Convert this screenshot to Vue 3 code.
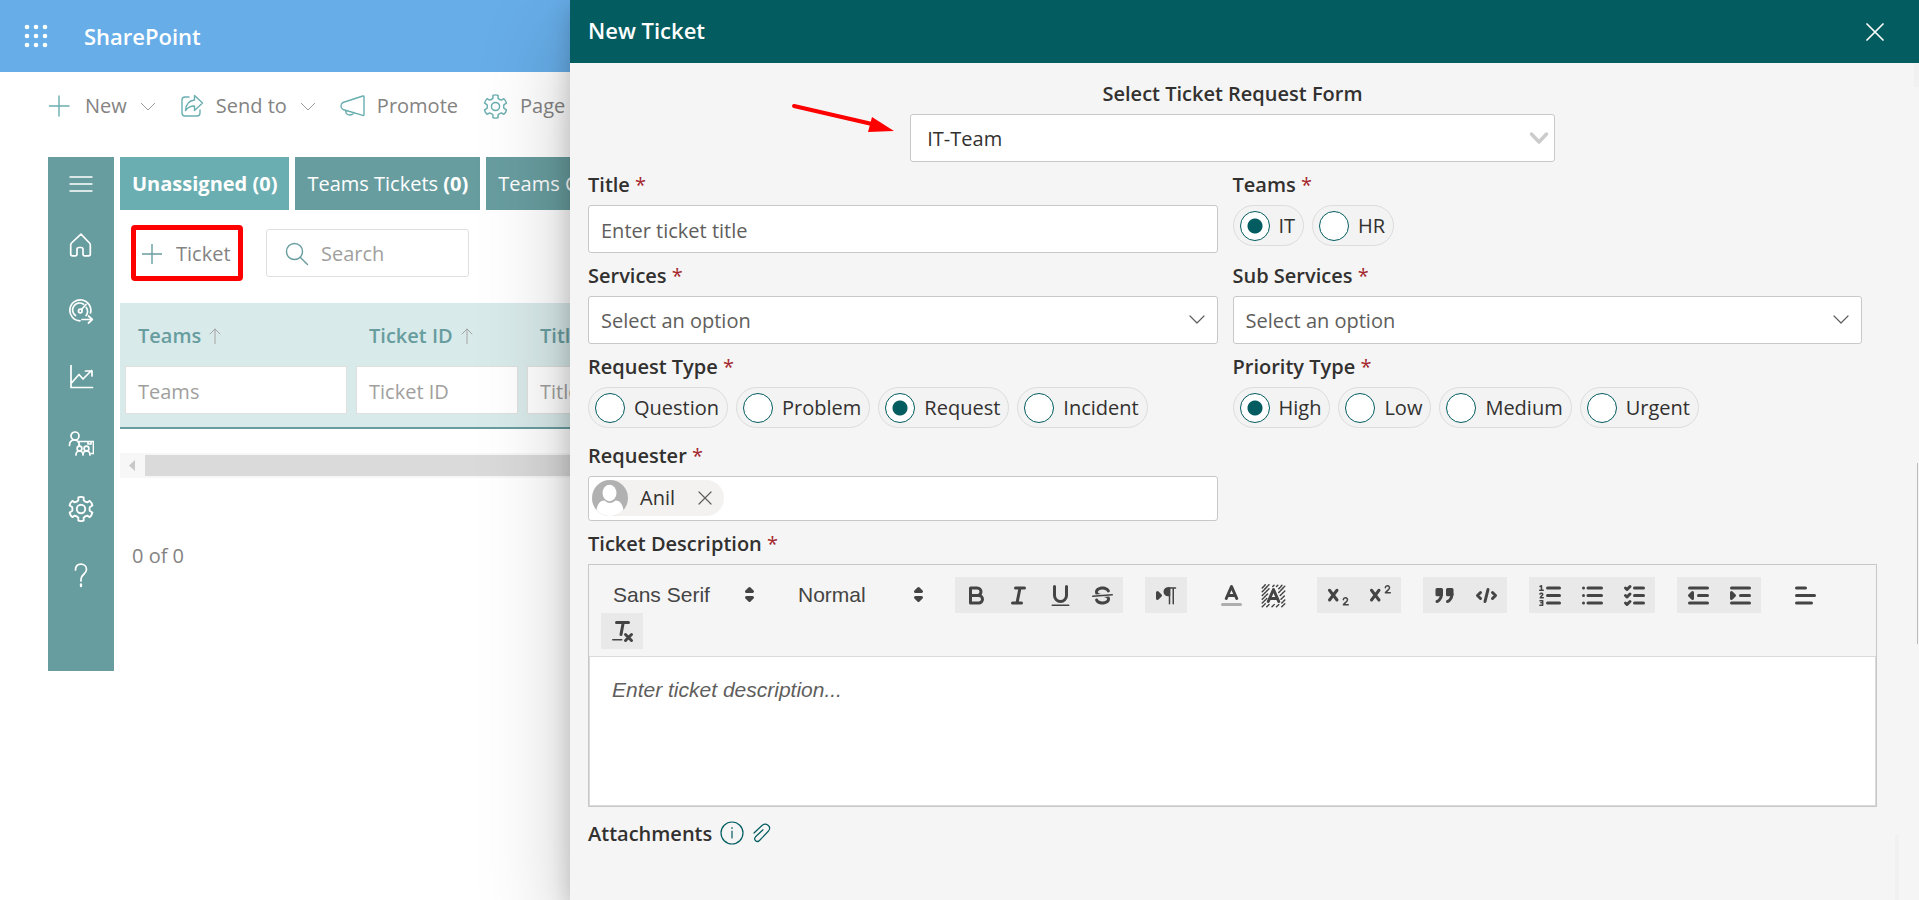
<script setup>
import { ref } from 'vue'

const tabs = [
  { name: 'Unassigned', count: 0 },
  { name: 'Teams Tickets', count: 0 },
  { name: 'Teams Closed', count: 0 },
]
const columns = [
  { id: 'teams', name: 'Teams' },
  { id: 'ticket-id', name: 'Ticket ID' },
  { id: 'title', name: 'Title' },
]
const requestTypes = ['Question', 'Problem', 'Request', 'Incident']
const priorities = ['High', 'Low', 'Medium', 'Urgent']
const team = ref('IT')
const requestType = ref('Request')
const priority = ref('High')
const activeTab = ref(0)

function gearPath() {
  const at = (r, deg) => {
    const a = (deg * Math.PI) / 180
    return `${(12 + r * Math.cos(a)).toFixed(2)} ${(12 + r * Math.sin(a)).toFixed(2)}`
  }
  let d = ''
  for (let k = 0; k < 6; k++) {
    const t = -90 + 60 * k
    d += `${k ? 'L' : 'M'}${at(8.4, t - 17)}L${at(11, t - 13)}Q${at(11.6, t)} ${at(11, t + 13)}L${at(8.4, t + 17)}Q${at(7.6, t + 30)} ${at(8.4, t + 43)}`
  }
  return d + 'Z'
}
const gear = gearPath()
</script>

<template>
  <div class="page">
    <div class="site">
      <header class="suite">
        <button class="bare waffle" aria-label="App launcher">
          <svg width="24" height="24" viewBox="0 0 24 24">
            <template v-for="y in 3" :key="y">
              <circle v-for="x in 3" :key="x" :cx="x * 9 - 6" :cy="y * 9 - 6" r="2.3" />
            </template>
          </svg>
        </button>
        <a class="brand" href="#">SharePoint</a>
      </header>

      <nav class="commands">
        <button class="bare command">
          <svg class="line" width="24" height="24" viewBox="0 0 24 24"><path d="M10 2v20M0 12h20" /></svg>
          <span>New</span>
          <svg class="grey" width="14" height="20" viewBox="0 0 14 20"><path d="M0 7l7 7 7-7" /></svg>
        </button>
        <button class="bare command">
          <svg class="line" width="24" height="24" viewBox="0 0 24 24"><path d="M9 3H5a3 3 0 0 0-3 3v13a3 3 0 0 0 3 3h12a3 3 0 0 0 3-3v-3M14.500 1.500l8 7.500-8 7.500V12c-4 0-6.500 1-9 4.500.5-6.500 3.500-10 9-10.500z" /></svg>
          <span>Send to</span>
          <svg class="grey" width="14" height="20" viewBox="0 0 14 20"><path d="M0 7l7 7 7-7" /></svg>
        </button>
        <button class="bare command">
          <svg class="line" width="25" height="24" viewBox="0 0 25 24"><path d="M3 8.500L22.800 2q1.200-.3 1.200 1v17.500q0 1.200-1.200.9L3 15.500Q1 14.500 1 12t2-3.500zM5.500 16.500c.3 3 2 4.500 4.200 4.500s3.500-1 4.300-2.500" /></svg>
          <span>Promote</span>
        </button>
        <button class="bare command">
          <svg class="line" width="25" height="25" viewBox="0 0 24 24"><path :d="gear" /><circle cx="12" cy="12" r="3.900" /></svg>
          <span>Page details</span>
        </button>
      </nav>

      <div class="workspace">
        <nav class="rail">
          <button class="bare" aria-label="Menu"><svg width="26" height="16" viewBox="0 0 26 16"><path d="M2 1h22M2 8h22M2 15h22" stroke-width="1.400" /></svg></button>
          <button class="bare" aria-label="Home"><svg width="26" height="26" viewBox="0 0 26 26"><path d="M13 2.200L3.500 11q-.8.8-.8 2v9q0 1.800 1.800 1.800h3q1.500 0 1.500-1.500v-5q0-1.800 1.800-1.800h2.400q1.800 0 1.800 1.800v5q0 1.500 1.500 1.500h4q1.800 0 1.800-1.800v-9q0-1.200-.8-2z" /></svg></button>
          <button class="bare" aria-label="Dashboard"><svg width="26" height="26" viewBox="0 0 26 26"><path d="M12 22.800A10.500 10.500 0 1 1 22.500 15M7.500 17.500A6.800 6.800 0 0 1 15.500 6.300M18.300 9.500a7 7 0 0 1-.2 8M13.500 11.500L18 6.500M14 21.500h10M20.500 18l3.800 3.500-3.800 3.500" /><circle cx="12.300" cy="13" r="1.800" /></svg></button>
          <button class="bare" aria-label="Reports"><svg width="26" height="26" viewBox="0 0 26 26"><path d="M3 1.500v22h21.500M3 19.500l8-9 4 4.500 8.500-8.500M17.500 7H24v5" /></svg></button>
          <button class="bare" aria-label="Teams"><svg width="26" height="26" viewBox="0 0 26 26"><circle cx="7" cy="6" r="4" /><path d="M1.500 15.500c0-4 2-5.500 5-5.500s4.500 1.500 5 5.500M11 16v-4.500h14.500v12h-2M20 12v2h3v-2M8 25c0-3 1.500-4 3.500-4s3.500 1 3.500 4c0-3 1.500-4 3.500-4s3.500 1 3.500 4" /><circle cx="11.500" cy="18.500" r="2.400" /><circle cx="18.500" cy="18.500" r="2.400" /></svg></button>
          <button class="bare" aria-label="Settings"><svg width="26" height="26" viewBox="0 0 24 24"><path :d="gear" /><circle cx="12" cy="12" r="3.900" /></svg></button>
          <button class="bare" aria-label="Help"><svg width="26" height="26" viewBox="0 0 26 26"><path d="M7.500 8c0-4 2.500-5.800 5.500-5.800s5.500 2 5.500 5.300c0 4.500-5.500 5-5.500 9.500v2" /><path d="M13 22.300v1.900" stroke-width="2.200" /></svg></button>
        </nav>

        <main class="board">
          <div class="tabs">
            <button
              v-for="(tab, i) in tabs" :key="tab.name" class="bare tab"
              :class="{ active: i === activeTab }" @click="activeTab = i"
            >{{ tab.name }} <b>({{ tab.count }})</b></button>
          </div>
          <div class="actions">
            <button class="bare new-ticket">
              <svg width="20" height="20" viewBox="0 0 20 20"><path d="M10 0v20M0 10h20" /></svg>
              <span>Ticket</span>
            </button>
            <label class="search">
              <svg width="24" height="24" viewBox="0 0 24 24"><circle cx="9.500" cy="9.500" r="8" /><path d="M15.200 15.200L22.500 22.500" /></svg>
              <input type="search" placeholder="Search" aria-label="Search">
            </label>
          </div>
          <table class="grid">
            <thead>
              <tr>
                <th v-for="col in columns" :key="col.id" :class="col.id">
                  <span class="col-name">{{ col.name }}
                    <svg width="12" height="16" viewBox="0 0 12 16"><path d="M6 15.500V1M1 6l5-5 5 5" /></svg>
                  </span>
                  <input :placeholder="col.name" :aria-label="'Filter by ' + col.name">
                </th>
              </tr>
            </thead>
          </table>
          <div class="hscroll">
            <svg width="25" height="25" viewBox="0 0 25 25"><path d="M15 7v11l-6-5.500z" /></svg>
            <div class="thumb"></div>
          </div>
          <p class="count">0 of 0</p>
        </main>
      </div>
    </div>

    <section class="panel" role="dialog" aria-labelledby="panel-title">
      <header class="panel-head">
        <h1 id="panel-title">New Ticket</h1>
        <button class="bare" aria-label="Close">
          <svg width="18" height="18" viewBox="0 0 18 18"><path d="M1 1l16 16M17 1L1 17" /></svg>
        </button>
      </header>

      <form class="panel-body" @submit.prevent>
        <div class="form-picker">
          <label for="request-form">Select Ticket Request Form</label>
          <div class="drop">
            <select id="request-form"><option>IT-Team</option></select>
            <svg class="thick" width="20" height="16" viewBox="0 0 20 16"><path d="M2.500 4l7.500 8 7.500-8" /></svg>
          </div>
          <svg class="pointer" width="104" height="30" viewBox="0 0 104 30">
            <path class="shaft" d="M3 4l78 18" />
            <path class="tip" d="M81 15l22 14-26 1z" />
          </svg>
        </div>

        <div class="fields">
          <div class="field">
            <label for="title">Title <i>*</i></label>
            <input id="title" class="box" placeholder="Enter ticket title">
          </div>
          <div class="field">
            <span id="teams-label" class="label">Teams <i>*</i></span>
            <div class="pills" role="radiogroup" aria-labelledby="teams-label">
              <label v-for="t in ['IT', 'HR']" :key="t" class="pill"><input v-model="team" type="radio" name="team" :value="t">{{ t }}</label>
            </div>
          </div>
          <div class="field">
            <label for="services">Services <i>*</i></label>
            <div class="drop">
              <select id="services" class="empty"><option>Select an option</option></select>
              <svg width="16" height="16" viewBox="0 0 16 16"><path d="M1 4l7 7 7-7" /></svg>
            </div>
          </div>
          <div class="field">
            <label for="sub-services">Sub Services <i>*</i></label>
            <div class="drop">
              <select id="sub-services" class="empty"><option>Select an option</option></select>
              <svg width="16" height="16" viewBox="0 0 16 16"><path d="M1 4l7 7 7-7" /></svg>
            </div>
          </div>
          <div class="field">
            <span id="type-label" class="label">Request Type <i>*</i></span>
            <div class="pills" role="radiogroup" aria-labelledby="type-label">
              <label v-for="t in requestTypes" :key="t" class="pill"><input v-model="requestType" type="radio" name="type" :value="t">{{ t }}</label>
            </div>
          </div>
          <div class="field">
            <span id="priority-label" class="label">Priority Type <i>*</i></span>
            <div class="pills" role="radiogroup" aria-labelledby="priority-label">
              <label v-for="t in priorities" :key="t" class="pill"><input v-model="priority" type="radio" name="priority" :value="t">{{ t }}</label>
            </div>
          </div>
          <div class="field">
            <label for="requester">Requester <i>*</i></label>
            <div class="people">
              <span class="persona">
                <svg class="avatar" width="36" height="36" viewBox="0 0 36 36">
                  <circle class="disc" cx="18" cy="18" r="18" />
                  <path d="M4.500 30c1-6.500 4-9.500 8-9.500 2 1.700 3.500 2.500 5.500 2.500s3.500-.8 5.500-2.500c4 0 7 3 8 9.500A18 18 0 0 1 4.500 30z" />
                  <ellipse cx="17.500" cy="13" rx="7" ry="8.200" />
                </svg>
                Anil
                <button class="bare" aria-label="Remove Anil">
                  <svg width="14" height="14" viewBox="0 0 14 14"><path d="M1 1l12 12M13 1L1 13" /></svg>
                </button>
              </span>
              <input id="requester">
            </div>
          </div>
        </div>

        <label for="description">Ticket Description <i>*</i></label>
        <div class="editor">
          <div class="toolbar">
            <span class="picker font">
              <select aria-label="Font"><option>Sans Serif</option></select>
              <svg viewBox="0 0 18 18"><path class="fill" d="M7 11l2 2 2-2zM7 7l2-2 2 2z" /></svg>
            </span>
            <span class="picker">
              <select aria-label="Heading"><option>Normal</option></select>
              <svg viewBox="0 0 18 18"><path class="fill" d="M7 11l2 2 2-2zM7 7l2-2 2 2z" /></svg>
            </span>
            <span class="group">
              <button class="bare" aria-label="Bold"><svg viewBox="0 0 18 18"><path d="M5,4H9.500A2.500,2.500,0,0,1,12,6.500v0A2.500,2.500,0,0,1,9.500,9H5A0,0,0,0,1,5,9V4A0,0,0,0,1,5,4Z" /><path d="M5,9h5.500A2.500,2.500,0,0,1,13,11.500v0A2.500,2.500,0,0,1,10.500,14H5a0,0,0,0,1,0,0V9A0,0,0,0,1,5,9Z" /></svg></button>
              <button class="bare" aria-label="Italic"><svg viewBox="0 0 18 18"><path d="M7 4h6M5 14h6M8 14l2-10" /></svg></button>
              <button class="bare" aria-label="Underline"><svg viewBox="0 0 18 18"><path d="M5,3V9a4.012,4.012,0,0,0,4,4H9a4.012,4.012,0,0,0,4-4V3" /><rect class="fill" x="3" y="15" width="12" height="1" rx=".5" /></svg></button>
              <button class="bare" aria-label="Strikethrough"><svg viewBox="0 0 18 18"><path class="thin" d="M15.500 8.500l-13 1" /><path class="fill" d="M9.007,8C6.542,7.791,6,7.519,6,6.500,6,5.792,7.283,5,9,5c1.571,0,2.765.679,2.969,1.309a1,1,0,0,0,1.900-.617C13.356,4.106,11.354,3,9,3,6.200,3,4,4.538,4,6.500a3.200,3.200,0,0,0,.5,1.843Z" /><path class="fill" d="M8.984,10C11.457,10.208,12,10.479,12,11.500c0,.708-1.283,1.500-3,1.500-1.571,0-2.765-.679-2.969-1.309a1,1,0,1,0-1.900.617C4.644,13.894,6.646,15,9,15c2.800,0,5-1.538,5-3.500a3.200,3.200,0,0,0-.5-1.843Z" /></svg></button>
            </span>
            <span class="group">
              <button class="bare" aria-label="Text direction"><svg viewBox="0 0 18 18"><path class="solid" d="M3 11l2-2-2-2z" /><path class="thin solid" d="M11 4h-1a2.500 2.500 0 0 0 0 5h1z" /><path class="thin" d="M11 4v10.500M13.500 4v10.500M10 4h5" /></svg></button>
            </span>
            <span class="group plain">
              <button class="bare" aria-label="Text colour"><svg viewBox="0 0 18 18"><path class="faint" d="M3 15h12" /><path d="M5.500 11L9 3l3.500 8M11.630 9H6.380" /></svg></button>
              <button class="bare" aria-label="Highlight colour"><svg viewBox="0 0 18 18"><path class="thin" stroke-dasharray="1.200 .7" d="M1.500 4l2-2.200M1.500 6.500l4.500-4.700M1.500 9l4.500-4.500M1.500 11.500L5.500 7.500M1.500 14l3-3M1.500 16.500l2-2M4.500 16.500l1.500-1.500M8.500 3l1.200-1.200M11 3l1.200-1.200M8 16.500L9.500 15M11 16.500l1.500-1.500M12.500 4.500l2.500-2.700M12.500 7l4-4.200M13.500 9l3-3M14 11.500l2.500-2.500M14.500 14l2-2M14.500 16.500l2-2" /><path d="M5.500 13L9 5l3.500 8M11.630 11H6.380" /></svg></button>
            </span>
            <span class="group">
              <button class="bare" aria-label="Subscript"><svg viewBox="0 0 18 18"><path d="M3 5.500l5 6.500M8 5.500l-5 6.500" /><path class="thin" d="M12.200 11.800c.2-1.800 3-1.600 2.800.2-.1 1-1.500 1.600-2.700 3.200H15.500" /></svg></button>
              <button class="bare" aria-label="Superscript"><svg viewBox="0 0 18 18"><path d="M3 5.500l5 6.500M8 5.500l-5 6.500" /><path class="thin" d="M12.200 3.800c.2-1.800 3-1.600 2.800.2-.1 1-1.500 1.600-2.700 3.200H15.500" /></svg></button>
            </span>
            <span class="group">
              <button class="bare" aria-label="Quote"><svg viewBox="0 0 18 18"><path class="solid" d="M4 5h3v3.500H4zM11 5h3v3.500h-3z" /><path d="M7 8c0 4.031-3 5-3 5M14 8c0 4.031-3 5-3 5" /></svg></button>
              <button class="bare" aria-label="Code"><svg viewBox="0 0 18 18"><path d="M5 7L3 9l2 2M13 7l2 2-2 2M10 5l-2 8" /></svg></button>
            </span>
            <span class="group">
              <button class="bare" aria-label="Numbered list"><svg viewBox="0 0 18 18"><path d="M7 4h8M7 9h8M7 14h8" /><path class="thin" d="M2 3l1-.5V5.500M1.800 5.500h2.400M2 8c.5-.8 2-.5 1.800.4C3.700 9 2.500 9.500 2.200 10.500H4.200M2 12.500h1.800v1.300H2.600M3.800 13.800v1.700H1.900" /></svg></button>
              <button class="bare" aria-label="Bulleted list"><svg viewBox="0 0 18 18"><path d="M6 4h9M6 9h9M6 14h9M3 4h0M3 9h0M3 14h0" /></svg></button>
              <button class="bare" aria-label="Checklist"><svg viewBox="0 0 18 18"><path d="M9 4h6M9 9h6M9 14h6M3 4l1 1 2-2M3 9l1 1 2-2M3 14l1 1 2-2" /></svg></button>
            </span>
            <span class="group indent">
              <button class="bare" aria-label="Decrease indent"><svg viewBox="0 0 18 18"><path d="M3 14h12M3 4h12M9 9h6" /><path class="solid" d="M5 7v4L3 9z" /></svg></button>
              <button class="bare" aria-label="Increase indent"><svg viewBox="0 0 18 18"><path d="M3 14h12M3 4h12M9 9h6" /><path class="solid" d="M3 7v4l2-2z" /></svg></button>
            </span>
            <span class="group plain">
              <button class="bare" aria-label="Align"><svg viewBox="0 0 18 18"><path d="M3 9h12M3 14h10M3 4h6" /></svg></button>
            </span>
            <span class="group">
              <button class="bare" aria-label="Clear formatting"><svg viewBox="0 0 18 18"><path d="M5 3h8M8 11l1.500-8M11 11l4 4M15 11l-4 4" /><rect class="fill" x="2" y="14" width="7" height="1" rx=".5" /></svg></button>
            </span>
          </div>
          <textarea id="description" placeholder="Enter ticket description..."></textarea>
        </div>

        <div class="attach">
          <span class="label">Attachments</span>
          <button class="bare" aria-label="Attachment info"><svg width="24" height="24" viewBox="0 0 24 24"><circle cx="12" cy="12" r="11" /><path d="M12 10v7M12 6.500v1" /></svg></button>
          <button class="bare" aria-label="Attach a file"><svg width="20" height="20" viewBox="0 0 20 20"><path d="M2 10l8-7.500c4-3.500 10 1 6.500 5.500l-9 9.500c-2.500 2.500-6.500-.8-4-3.700l7.500-7" /></svg></button>
        </div>
      </form>
      <div class="scroll-mark"></div>
      <div class="scroll-track top"></div>
      <div class="scroll-track bottom"></div>
    </section>
  </div>
</template>

<style>
body {
  margin: 0;
}
</style>

<style scoped>
.page {
  display: flex;
  min-height: 100vh;
  overflow: hidden;
  background: #fff;
  color: #323130;
  font: 20px/28px "Open Sans", "Noto Sans", sans-serif;
}
.page * {
  box-sizing: border-box;
}
button,
input,
select,
textarea {
  font: inherit;
  color: inherit;
}
.bare {
  padding: 0;
  border: 0;
  background: none;
  display: flex;
  align-items: center;
}
svg {
  flex: none;
  fill: none;
  stroke-linecap: round;
  stroke-linejoin: round;
}
::placeholder {
  color: #605e5c;
  opacity: 1;
}

.site {
  flex: 0 0 570px;
  overflow: hidden;
}
.suite {
  display: flex;
  align-items: center;
  gap: 36px;
  height: 72px;
  padding-left: 24px;
  background: #67ade8;
}
.waffle svg {
  fill: #fff;
}
.brand {
  color: #fff;
  font-size: 22px;
  font-weight: 600;
  text-decoration: none;
}
.commands {
  display: flex;
  gap: 25px;
  height: 68px;
  padding-left: 49px;
  white-space: nowrap;
}
.command {
  gap: 12px;
  color: #848382;
}
.line {
  stroke: #6aaeb0;
  stroke-width: 1.4;
}
.grey {
  margin-left: 2px;
  stroke: #9a9998;
}

.workspace {
  display: flex;
  gap: 6px;
  margin-top: 17px;
  padding-left: 48px;
}
.rail {
  display: flex;
  flex-direction: column;
  gap: 40px;
  width: 66px;
  height: 514px;
  padding: 19px 20px;
  background: #689d9f;
}
.rail svg {
  stroke: #fff;
  stroke-width: 1.7;
}
.board {
  flex: 1;
}
.tabs {
  display: flex;
  gap: 6px;
}
.tab {
  height: 53px;
  padding: 0 12px;
  background: #689d9f;
  color: #fff;
  font-weight: 500;
  white-space: pre;
}
.tab b {
  font-weight: 700;
}
.tab.active {
  background: #6aaeb1;
  font-weight: 700;
}
.actions {
  display: flex;
  align-items: center;
  gap: 23px;
  height: 93px;
  padding: 0 0 7px 11px;
}
.new-ticket {
  gap: 14px;
  height: 56px;
  width: 112px;
  padding: 2px 6px 0;
  border: 5px solid #f00;
  border-radius: 4px;
  color: #848382;
}
.new-ticket svg,
.search svg {
  stroke: #689d9f;
  stroke-width: 1.4;
}
.search {
  display: flex;
  align-items: center;
  gap: 12px;
  width: 203px;
  height: 48px;
  padding: 2px 18px 0;
  border: 1px solid #dfdfde;
  border-radius: 3px;
}
.search input {
  min-width: 0;
  width: 100%;
  padding: 0;
  border: 0;
  background: none;
}
.search ::placeholder,
.grid ::placeholder {
  color: #a19f9d;
}
.grid {
  width: 1750px;
  border-collapse: collapse;
  table-layout: fixed;
  background: #d9eaea;
  border-bottom: 2px solid #689d9f;
}
.grid th {
  height: 125px;
  padding: 0 4px 0 5px;
  color: #689d9f;
  font-weight: 600;
  text-align: left;
  vertical-align: top;
}
.grid .teams {
  width: 231px;
}
.grid .ticket-id {
  width: 171px;
}
.col-name {
  display: flex;
  align-items: center;
  gap: 8px;
  height: 63px;
  padding: 2px 0 0 13px;
}
.col-name svg {
  stroke: #a3a3a2;
}
.grid input {
  display: block;
  width: 100%;
  height: 48px;
  padding: 2px 12px 0;
  border: 1px solid #dfdfde;
  background: #fff;
  font-weight: 400;
}
.hscroll {
  display: flex;
  align-items: center;
  width: 1750px;
  height: 25px;
  margin-top: 24px;
  background: #f7f7f7;
}
.hscroll svg {
  fill: #c8c8c8;
}
.thumb {
  flex: 1;
  height: 21px;
  background: #dadada;
}
.count {
  margin: 64px 0 0 12px;
  color: #848382;
}

.panel {
  position: relative;
  flex: 1;
  min-width: 0;
  background: #f5f5f5;
  box-shadow: 0 38px 86px rgba(0, 0, 0, 0.22), 0 7px 22px rgba(0, 0, 0, 0.18);
}
.panel-head {
  display: flex;
  align-items: center;
  justify-content: space-between;
  height: 63px;
  padding: 0 35px 0 18px;
  background: #035c5f;
  color: #fff;
}
.panel-head h1 {
  margin: 0;
  padding-bottom: 4px;
  font-size: 22px;
  font-weight: 600;
}
.panel-head svg {
  stroke: #fff;
  stroke-width: 1.7;
}
.panel-body {
  padding: 11px 42px 0 18px;
}
.form-picker {
  position: relative;
  width: 50%;
  margin: 0 auto 3px;
  text-align: center;
}
.pointer {
  position: absolute;
  right: calc(100% + 15px);
  top: 28px;
}
.shaft {
  stroke: #f00;
  stroke-width: 4;
}
.tip {
  fill: #f00;
}
.form-picker > label,
.field > label,
.label,
.panel-body > label {
  display: block;
  font-weight: 600;
  line-height: 40px;
}
i {
  color: #a4262c;
  font-style: normal;
  font-weight: 400;
}
.fields {
  display: grid;
  grid-template-columns: 1fr 1fr;
  gap: 3px 15px;
  margin: 0 15px 3px 0;
}
.box,
.drop select,
.people {
  width: 100%;
  height: 48px;
  padding: 2px 12px 0;
  border: 1px solid #c8c8c8;
  border-radius: 3px;
  background: #fff;
}
.box {
  display: block;
}
.drop {
  position: relative;
}
.drop select {
  display: block;
  appearance: none;
}
.form-picker select {
  padding: 2px 16px 0;
}
.drop .empty {
  color: #605e5c;
}
.drop svg {
  position: absolute;
  right: 13px;
  top: 16px;
  stroke: #605e5c;
  stroke-width: 1.2;
  pointer-events: none;
}
.drop .thick {
  right: 6px;
  stroke: #ccc;
  stroke-width: 3.5;
}
.pills {
  display: flex;
  gap: 8px;
  height: 46px;
}
.pill {
  display: flex;
  align-items: center;
  gap: 9px;
  height: 41px;
  padding: 0 8px 0 6px;
  border: 1px solid #dcdcdc;
  border-radius: 21px;
  background: #f3f3f3;
}
.pill input {
  appearance: none;
  width: 30px;
  height: 30px;
  margin: 0;
  border: 1px solid #035c5f;
  border-radius: 50%;
  background: #fff;
}
.pill input:checked {
  background: radial-gradient(circle, #035c5f 7px, #fff 8px);
}
.people {
  display: flex;
  align-items: center;
  height: 45px;
  padding: 0 3px 1px;
}
.people input {
  flex: 1;
  border: 0;
  outline: 0;
}
.persona {
  display: flex;
  align-items: center;
  gap: 12px;
  height: 36px;
  padding-right: 12px;
  border-radius: 18px;
  background: #f3f2f1;
}
.avatar {
  fill: #fff;
}
.avatar .disc {
  fill: #b1b1b1;
}
.persona button {
  margin-left: 11px;
}
.persona button svg {
  stroke: #605e5c;
  stroke-width: 1.2;
}

.editor {
  border: 1px solid #c8c8c8;
}
.toolbar {
  display: flex;
  flex-wrap: wrap;
  column-gap: 22px;
  padding: 12px 12px 7px;
  border-bottom: 1px solid #dadada;
  color: #444;
  font: 21px/36px "Liberation Sans", Arial, sans-serif;
}
.toolbar svg {
  width: 27px;
  height: 27px;
  stroke: #444;
  stroke-width: 2;
}
.toolbar .fill {
  fill: #444;
  stroke: none;
}
.toolbar .solid {
  fill: #444;
}
.toolbar .thin {
  stroke-width: 1;
}
.toolbar .faint {
  opacity: 0.4;
}
.picker {
  position: relative;
  width: 147px;
  height: 36px;
}
.picker.font {
  width: 163px;
}
.picker select {
  width: 100%;
  height: 36px;
  padding: 0 12px;
  border: 0;
  background: none;
  appearance: none;
}
.picker svg {
  position: absolute;
  right: 1px;
  top: 4px;
  pointer-events: none;
}
.toolbar .picker .fill {
  stroke: #444;
  stroke-width: 2;
}
.group {
  display: flex;
  height: 36px;
  background: #e9e9e9;
}
.group.plain {
  padding: 0 1px;
  background: none;
}
.group button {
  justify-content: center;
  width: 42px;
}
.editor textarea {
  display: block;
  width: 100%;
  height: 149px;
  padding: 18px 22px;
  border: 1px solid #dadada;
  border-top: 0;
  background: #fff;
  font: 21px/30px "Liberation Sans", Arial, sans-serif;
  resize: none;
}
.editor textarea::placeholder {
  font-style: italic;
}
.attach {
  display: flex;
  align-items: center;
  margin-top: 7px;
}
.attach button {
  margin-left: 8px;
  padding-bottom: 3px;
}
.attach svg {
  stroke: #035c5f;
  stroke-width: 1.2;
}
.scroll-mark {
  position: absolute;
  top: 463px;
  right: 1px;
  width: 1px;
  height: 181px;
  background: #bbb;
}
.scroll-track {
  position: absolute;
  background: #f1f1f1;
}
.scroll-track.top {
  top: 63px;
  right: 0;
  width: 5px;
  height: 24px;
}
.scroll-track.bottom {
  top: 835px;
  right: 20px;
  bottom: 0;
  width: 4px;
}
</style>
